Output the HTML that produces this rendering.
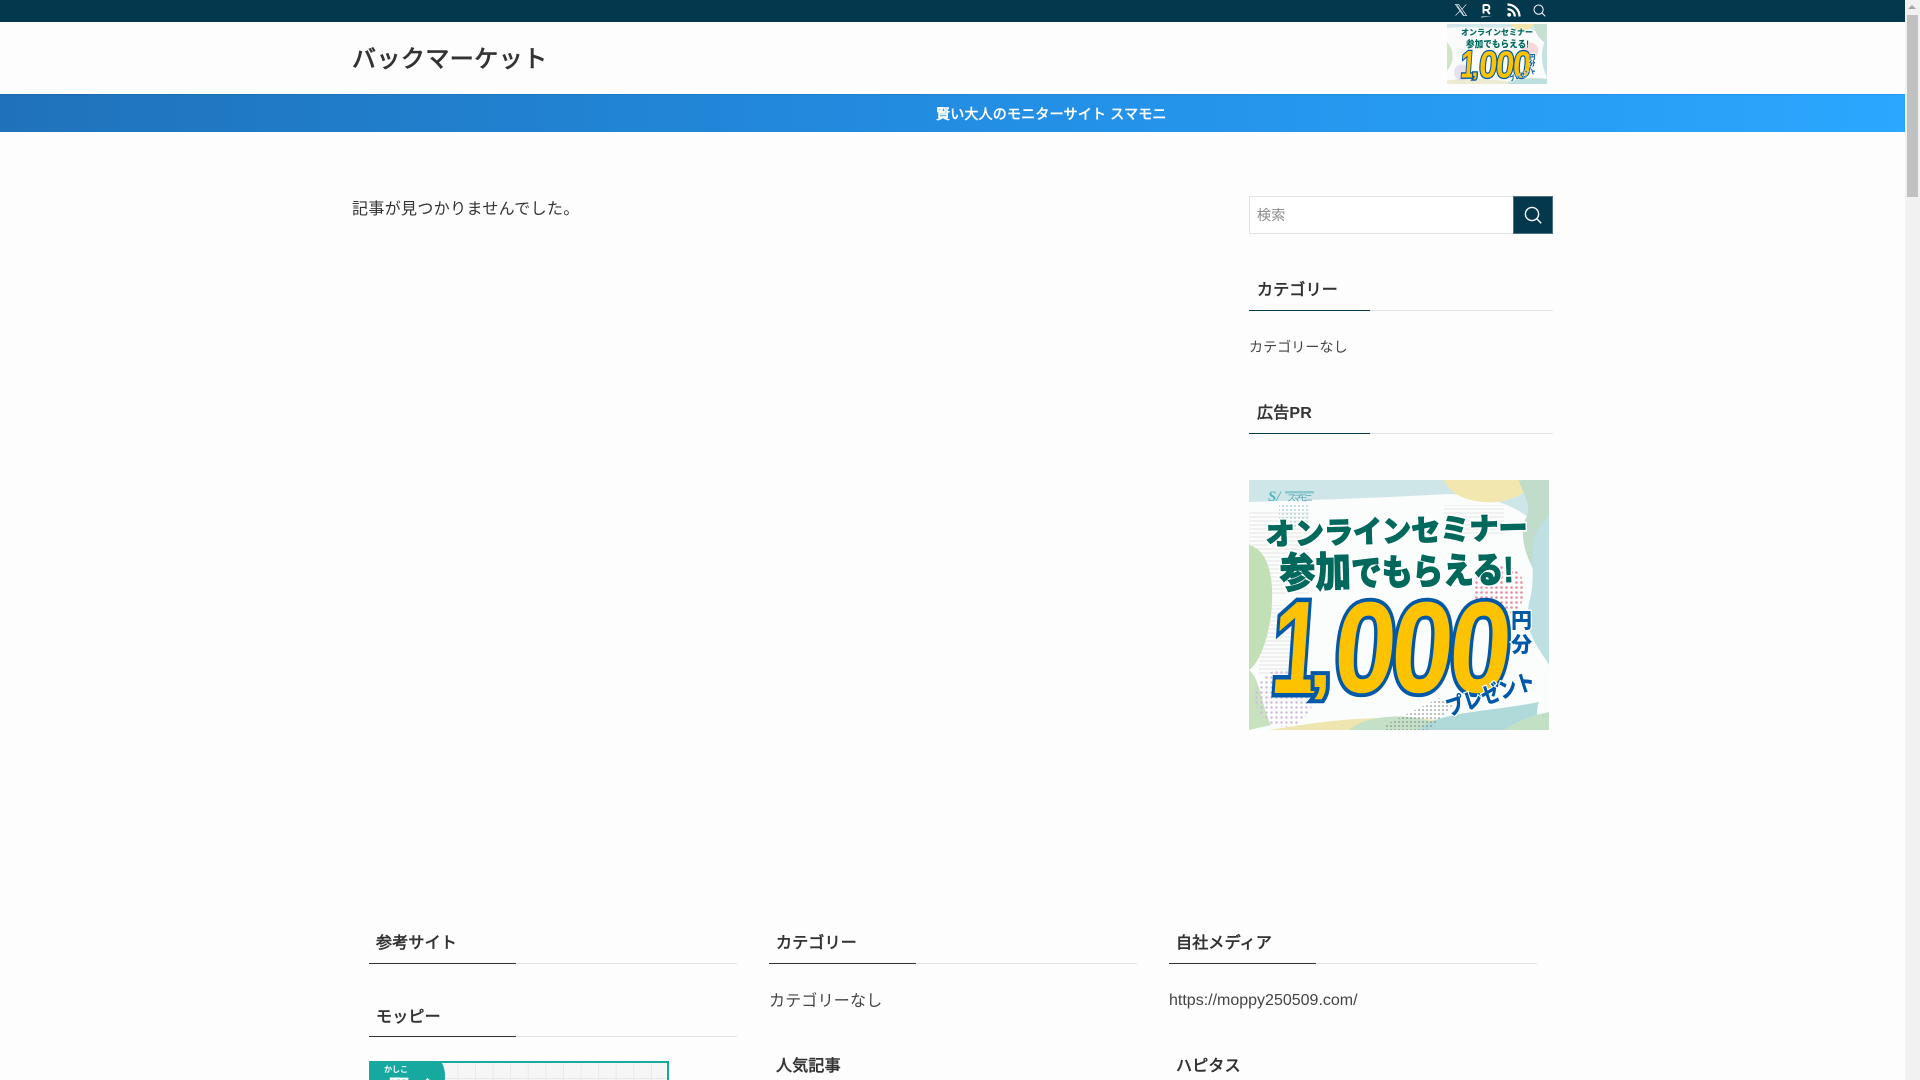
<!DOCTYPE html>
<html lang="ja"><head><meta charset="utf-8"><title>バックマーケット</title>
<style>
*{box-sizing:border-box}
html,body{margin:0;padding:0;width:1920px;height:1080px;overflow:hidden;background:#fdfdfd}
body{font-family:"Liberation Sans","WenQuanYi Zen Hei",sans-serif;color:#333;position:relative}
.a{position:absolute;white-space:nowrap}
.bar{left:0;top:0;width:1905px;height:22px;background:#04384c}
.nav{left:0;top:94px;width:1905px;height:38px;background:linear-gradient(90deg,#1f72ba 0%,#2390e6 55%,#2ba7ff 100%);box-shadow:inset 0 1px 1px rgba(0,0,0,.08)}
.sb{left:1905px;top:0;width:15px;height:1080px;background:#f1f1f1}
.th{left:1907px;top:15px;width:11px;height:182px;background:#c1c1c1}
.ar{left:1908px;top:5px;width:0;height:0;border-left:4px solid transparent;border-right:4px solid transparent;border-bottom:4px solid #a3a3a3}
.l{height:1px;background:#e3e3e3}
.d{height:1px;background:#04384c}
.f{height:1px;background:#333}
.h{font-size:16px;font-weight:bold;line-height:20px;color:#333;letter-spacing:.2px}
svg{position:absolute;display:block}
</style></head><body>
<div class="a bar"></div>
<svg style="left:1454px;top:3px" width="14" height="14" viewBox="0 0 24 24" fill="none" stroke="#fff" stroke-width="1.1"><path d="M2.5 2.5h5.5l13.5 19h-5.5zM5.5 4l11 16M21 2.5l-8 8.8M10.5 13.5l-8 8"/></svg>
<svg style="left:1480px;top:3px" width="14" height="16" viewBox="0 0 14 16"><path d="M3.5 1.5v9M3.5 2h3.5c3.2 0 3.2 5 0 5H3.5M6.8 7l3 4" fill="none" stroke="#fff" stroke-width="1.9"/><path d="M1 13.6l11.5-.7-11 1.6z" fill="#fff"/></svg>
<svg style="left:1507px;top:3px" width="14" height="14" viewBox="0 0 14 14" fill="none" stroke="#fff" stroke-width="2.2"><circle cx="2.2" cy="11.8" r="1.9" fill="#fff" stroke="none"/><path d="M.5 6.2a7.3 7.3 0 0 1 7.3 7.3M.5 1.5a12 12 0 0 1 12 12"/></svg>
<svg style="left:1533px;top:4px" width="13" height="13" viewBox="0 0 13 13" fill="none" stroke="#fff" stroke-width="1"><circle cx="5.6" cy="5.6" r="4.6"/><path d="M9 9l3.3 3.3"/></svg>

<div class="a" style="left:352px;top:44px;font-size:24px;line-height:32px;font-weight:bold;color:#333;letter-spacing:.45px">バックマーケット</div>

<svg style="left:1447px;top:24px" width="100" height="60" viewBox="0 0 300 180" preserveAspectRatio="none">
<rect width="300" height="180" fill="#fafcfb"/>
<path d="M0 0H300V40C270 20 240 8 190 10 120 14 60 6 0 12Z" fill="#d3e8ea"/>
<path d="M190 0H260C255 15 230 25 205 16Z" fill="#f3e7ae"/>
<path d="M260 0H300V60C280 50 262 25 260 0Z" fill="#c6e0d2"/>
<path d="M300 40V160C285 130 275 80 300 40Z" fill="#c4e2e3"/>
<path d="M0 55C20 75 25 110 0 140Z" fill="#cfe6c5"/>
<path d="M0 170C60 160 120 165 180 172 240 160 280 160 300 165V180H0Z" fill="#ecead0"/>
<path d="M180 180C195 165 250 160 300 165V180Z" fill="#bcdede"/>
<circle cx="250" cy="80" r="24" fill="#f0b9c0" opacity=".55"/>
<circle cx="45" cy="145" r="24" fill="#d9c6e2" opacity=".55"/>
<g font-family="Liberation Sans,Noto Sans CJK JP,sans-serif" font-weight="900">
<text x="42" y="33" font-size="24" textLength="216" lengthAdjust="spacingAndGlyphs" fill="#00695c" stroke="#fff" stroke-width="3" paint-order="stroke">オンラインセミナー</text>
<text x="57" y="70" font-size="29" textLength="189" lengthAdjust="spacingAndGlyphs" fill="#00695c" stroke="#fff" stroke-width="3" paint-order="stroke">参加でもらえる!</text>
</g>
<g transform="translate(20.8,-25.6) scale(.885,.875)" font-family="Liberation Sans,sans-serif" font-weight="bold" fill="#fdc300" stroke="#0058a8" stroke-width="9" paint-order="stroke" font-size="132">
<g transform="translate(0,213) skewX(-4)"><text x="20" stroke-width="9" textLength="50" lengthAdjust="spacingAndGlyphs">1</text></g>
<text x="60" y="207" font-size="80">,</text>
<g transform="translate(82,212) skewX(-5) scale(.84,.98)"><text x="0">0</text></g>
<g transform="translate(139,212) skewX(-5) scale(.84,.98)"><text x="0">0</text></g>
<g transform="translate(197,212) skewX(-5) scale(.84,.98)"><text x="0">0</text></g>
</g>
<g font-family="Liberation Sans,Noto Sans CJK JP,sans-serif" font-weight="900" fill="#0058a8" stroke="#fff" stroke-width="2" paint-order="stroke" font-size="19">
<text x="246" y="105">円</text><text x="246" y="124">分</text>
<text transform="translate(190,172) rotate(-18)" font-size="20" textLength="82" lengthAdjust="spacingAndGlyphs">プレゼント</text>
</g></svg>

<div class="a nav"></div>
<div class="a" style="left:936px;top:104px;font-size:14px;line-height:20px;font-weight:bold;color:#fff;letter-spacing:.2px">賢い大人のモニターサイト スマモニ</div>

<div class="a" style="left:352px;top:199px;font-size:16px;line-height:22px;color:#333;letter-spacing:.35px">記事が見つかりませんでした。</div>

<div class="a" style="left:1249px;top:196px;width:265px;height:38px;background:#fff;border:1px solid #e3e3e3;border-right:0"></div>
<div class="a" style="left:1257px;top:205px;font-size:14px;line-height:20px;color:#8a8a8a;letter-spacing:.3px">検索</div>
<div class="a" style="left:1513px;top:196px;width:40px;height:38px;background:#04384c;border:1px solid #4d6f7e"></div>
<svg style="left:1523px;top:205px" width="20" height="20" viewBox="0 0 20 20" fill="none" stroke="#fff" stroke-width="1.4"><circle cx="9" cy="9" r="6.6"/><path d="M13.8 13.8l4.4 4.4"/></svg>

<div class="a h" style="left:1257px;top:281px">カテゴリー</div>
<div class="a l" style="left:1249px;top:310px;width:304px"></div>
<div class="a d" style="left:1249px;top:310px;width:121px"></div>
<div class="a" style="left:1249px;top:337px;font-size:14px;line-height:20px;color:#444;letter-spacing:.1px">カテゴリーなし</div>

<div class="a h" style="left:1257px;top:404px">広告PR</div>
<div class="a l" style="left:1249px;top:433px;width:304px"></div>
<div class="a d" style="left:1249px;top:433px;width:121px"></div>

<svg style="left:1249px;top:480px" width="300" height="250" viewBox="0 0 300 250">
<defs>
<pattern id="st" width="4" height="4" patternUnits="userSpaceOnUse"><rect width="4" height="2" fill="#f0f0f0"/></pattern>
<pattern id="pk" width="5" height="5" patternUnits="userSpaceOnUse"><circle cx="2.5" cy="2.5" r="1.3" fill="#e88ba0"/></pattern>
<pattern id="pu" width="5" height="5" patternUnits="userSpaceOnUse"><circle cx="2.5" cy="2.5" r="1.2" fill="#cfb6dc"/></pattern>
<pattern id="bk" width="4" height="4" patternUnits="userSpaceOnUse"><circle cx="2" cy="2" r=".8" fill="#777"/></pattern>
<pattern id="te" width="4" height="4" patternUnits="userSpaceOnUse"><circle cx="2" cy="2" r="1" fill="#b5d8dc"/></pattern>
</defs>
<rect width="300" height="250" fill="#fbfcfc"/>
<rect x="0" y="30" width="60" height="85" fill="url(#st)"/>
<rect x="10" y="125" width="40" height="70" fill="url(#st)"/>
<rect x="195" y="25" width="60" height="30" fill="url(#st)"/>
<path d="M0 0H300V60C280 30 250 16 200 14 130 18 60 20 0 22Z" fill="#cfe6e9"/>
<path d="M195 0H285C280 15 250 30 215 18 205 14 198 8 195 0Z" fill="#f2e7ae"/>
<path d="M270 0H300V110C285 95 268 65 276 40 285 25 272 12 270 0Z" fill="#c2dccc"/>
<path d="M300 35V185C288 165 272 150 282 115 288 80 274 60 300 35Z" fill="#bfe0e3"/>
<path d="M0 65C20 70 26 100 22 135 18 165 8 185 0 190Z" fill="#c2dfb6"/>
<path d="M0 190C12 200 12 225 22 245L0 250Z" fill="#c8e2c0"/>
<path d="M20 250C70 242 120 234 190 240V250Z" fill="#eee6ae"/>
<path d="M100 250C120 232 175 232 200 250Z" fill="#c4e0c6"/>
<path d="M170 250C185 232 240 232 290 222 285 238 290 245 300 250Z" fill="#b0d9da"/>
<path d="M255 250C270 240 285 235 300 232V250Z" fill="#c2e0c4"/>
<rect x="30" y="25" width="30" height="22" fill="url(#te)"/>
<circle cx="250" cy="110" r="26" fill="url(#pk)"/>
<circle cx="35" cy="218" r="29" fill="url(#pu)"/>
<path d="M136 245L190 218 205 224 180 250H136Z" fill="url(#bk)"/>
<g font-family="Liberation Sans,Noto Sans CJK JP,sans-serif">
<text x="19" y="21" font-family="Liberation Serif,serif" font-style="italic" font-weight="bold" font-size="15" fill="#55b5c0">S/</text>
<text x="38" y="21" font-size="9" fill="#55a5b0" textLength="26">スマモニ</text>
<rect x="36" y="11" width="29" height="2.5" fill="#8cc7cf"/>
<g font-weight="900">
<text transform="translate(17,65) rotate(-1.5)" font-size="30" textLength="262" lengthAdjust="spacingAndGlyphs" fill="#00695c" stroke="#fff" stroke-width="4" paint-order="stroke">オンラインセミナー</text>
<text transform="translate(17,65) rotate(-1.5)" font-size="30" textLength="262" lengthAdjust="spacingAndGlyphs" fill="#00695c" stroke="#00695c" stroke-width="1">オンラインセミナー</text>
<text transform="translate(31,108) rotate(-1.5)" font-size="36" textLength="234" lengthAdjust="spacingAndGlyphs" fill="#00695c" stroke="#fff" stroke-width="4" paint-order="stroke"><tspan font-size="42">参加</tspan>でもらえる!</text>
<text transform="translate(31,108) rotate(-1.5)" font-size="36" textLength="234" lengthAdjust="spacingAndGlyphs" fill="#00695c" stroke="#00695c" stroke-width="1"><tspan font-size="42">参加</tspan>でもらえる!</text>
</g>
<g font-family="Liberation Sans,sans-serif" font-weight="bold" fill="#fdc300" stroke="#0058a8" stroke-width="8" paint-order="stroke" font-size="132">
<g transform="translate(0,213) skewX(-4)"><text x="20" stroke-width="9" textLength="50" lengthAdjust="spacingAndGlyphs">1</text></g>
<text x="60" y="207" font-size="80">,</text>
<g transform="translate(82,212) skewX(-5) scale(.84,.98)"><text x="0">0</text></g>
<g transform="translate(139,212) skewX(-5) scale(.84,.98)"><text x="0">0</text></g>
<g transform="translate(197,212) skewX(-5) scale(.84,.98)"><text x="0">0</text></g>
</g>
<g font-weight="900" fill="#0058a8" stroke="#fff" stroke-width="2.5" paint-order="stroke" font-size="21">
<text x="262" y="148">円</text><text x="262" y="172">分</text>
<text transform="translate(200,236) rotate(-18)" font-size="22" textLength="92" lengthAdjust="spacingAndGlyphs">プレゼント</text>
</g></g></svg>

<div class="a h" style="left:376px;top:934px">参考サイト</div>
<div class="a l" style="left:369px;top:963px;width:368px"></div>
<div class="a f" style="left:369px;top:963px;width:147px"></div>
<div class="a h" style="left:376px;top:1008px">モッピー</div>
<div class="a l" style="left:369px;top:1036px;width:368px"></div>
<div class="a f" style="left:369px;top:1036px;width:147px"></div>

<div class="a" style="left:369px;top:1061px;width:300px;height:19px;overflow:hidden;background-color:#f6f6f6;background-image:linear-gradient(90deg,#e9e9e9 1px,transparent 1px),linear-gradient(0deg,transparent 1px,#e9e9e9 1px,#e9e9e9 2px,transparent 2px);background-size:17.6px 100%,100% 100%;background-position:16px 0,0 0;border:2px solid #17a89f;border-bottom:0">
<div class="a" style="left:-2px;top:-2px;width:76px;height:30px;background:#17a89f;border-radius:0 8px 8px 0/0 18px 18px 0"></div>
<div class="a" style="left:13px;top:1px;font-size:8px;line-height:12px;font-weight:bold;color:#fff">かしこ</div>
<div class="a" style="left:17px;top:12px;font-size:22px;line-height:28px;font-weight:bold;color:#fff">賢イ</div>
</div>

<div class="a h" style="left:776px;top:934px">カテゴリー</div>
<div class="a l" style="left:769px;top:963px;width:368px"></div>
<div class="a f" style="left:769px;top:963px;width:147px"></div>
<div class="a" style="left:769px;top:991px;font-size:16px;line-height:22px;color:#444;letter-spacing:.2px">カテゴリーなし</div>
<div class="a h" style="left:776px;top:1057px">人気記事</div>

<div class="a h" style="left:1176px;top:934px">自社メディア</div>
<div class="a l" style="left:1169px;top:963px;width:368px"></div>
<div class="a f" style="left:1169px;top:963px;width:147px"></div>
<div class="a" style="left:1169px;top:990px;font-size:16px;line-height:22px;color:#444">https://moppy250509.com/</div>
<div class="a h" style="left:1176px;top:1057px">ハピタス</div>

<div class="a sb"></div>
<div class="a th"></div>
<div class="a ar"></div>
</body></html>
